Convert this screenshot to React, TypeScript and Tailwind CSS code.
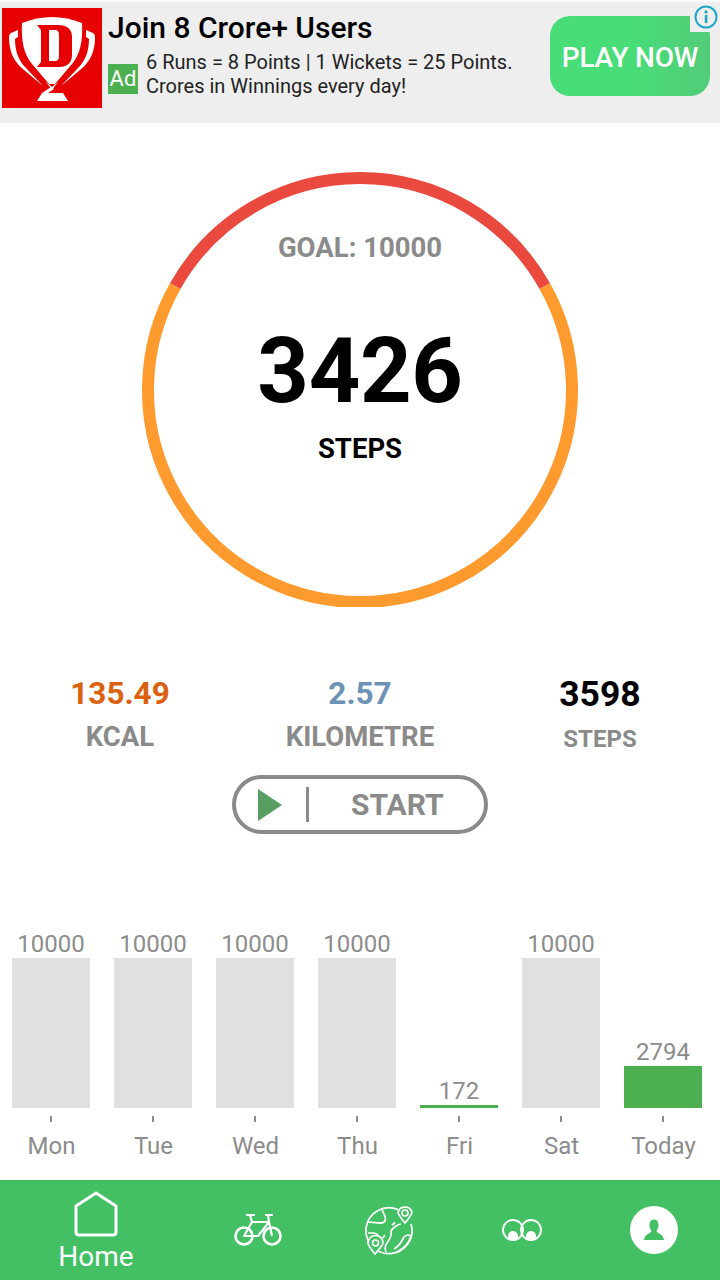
import React from "react";

const days = [
  { label: "Mon", value: "10000", height: 150, done: false },
  { label: "Tue", value: "10000", height: 150, done: false },
  { label: "Wed", value: "10000", height: 150, done: false },
  { label: "Thu", value: "10000", height: 150, done: false },
  { label: "Fri", value: "172", height: 3, done: true },
  { label: "Sat", value: "10000", height: 150, done: false },
  { label: "Today", value: "2794", height: 42, done: true },
];

function DreamLogo() {
  return (
    <svg viewBox="0 0 100 100" className="w-[100px] h-[100px] shrink-0">
      <rect width="100" height="100" fill="#e60000" />
      {/* handles */}
      <path d="M16 22 L9 25 Q7 26 7 29 C7 44 12 54 22 62 L41 78 L24 60 C16 52 13 42 13 31 L16 29 Z" fill="#fff" />
      <path d="M84 22 L91 25 Q93 26 93 29 C93 44 88 54 78 62 L59 78 L76 60 C84 52 87 42 87 31 L84 29 Z" fill="#fff" />
      {/* cup */}
      <path d="M20 15 C30 11 40 9 50 9 C60 9 70 11 80 15 C81 34 78 46 70 56 L53 76 L47 76 L30 56 C22 46 19 34 20 15 Z" fill="#fff" />
      {/* stem and base */}
      <path d="M44 74 L50 79 L56 74 L50 82 Z" fill="#fff" />
      <path d="M35 93 L40 85 L49 79 L52 81 L46 85 H61 L66 93 Z" fill="#fff" />
      {/* D */}
      <path
        fillRule="evenodd"
        d="M35 17 H56 C65 17 70 21 70 29 V47 C70 55 65 59 57 59 H35 L39 54 V22 Z M47 22 V53 H53 C56 53 57 51 57 48 V27 C57 24 56 22 53 22 Z"
        fill="#e60000"
      />
    </svg>
  );
}

function AdBanner() {
  return (
    <div className="h-[123px] shrink-0 border-t-2 border-[#fafafa] bg-[#eeeeee] relative flex pl-[2px] pt-[6px] font-['Roboto',sans-serif]">
      <DreamLogo />
      <div className="ml-[6px] w-[420px]">
        <div className="text-[30px] leading-[30px] font-medium text-black mt-[5px]">Join 8 Crore+ Users</div>
        <div className="flex mt-[7px]">
          <div className="w-[30px] h-[30px] mt-[14px] bg-[#4caf50] text-white text-[22px] leading-[30px] text-center shrink-0">Ad</div>
          <div className="ml-[8px] text-[20px] leading-[24px] text-[#222222] whitespace-nowrap">
            <div>6 Runs = 8 Points | 1 Wickets = 25 Points.</div>
            <div>Crores in Winnings every day!</div>
          </div>
        </div>
      </div>
      <div className="absolute left-[550px] top-[14px] w-[160px] h-[80px] rounded-[20px] bg-gradient-to-r from-[#48dd78] via-[#48dd78] to-[#52cc78] flex items-center justify-center pt-[3px] text-white text-[28px] font-medium tracking-[-0.2px]">
        PLAY NOW
      </div>
      <div className="absolute right-0 top-0 w-[30px] h-[30px] bg-[#eeeeee] flex items-center justify-center pl-[1px]">
        <svg viewBox="0 0 24 24" className="w-[24px] h-[24px]" fill="none">
          <circle cx="12" cy="12" r="10.5" stroke="#1da6c8" strokeWidth="2" />
          <rect x="10.8" y="10" width="2.6" height="8" fill="#1da6c8" />
          <circle cx="12" cy="6.9" r="1.6" fill="#1da6c8" />
        </svg>
      </div>
    </div>
  );
}

function Ring() {
  return (
    <div className="relative h-[484px] shrink-0 w-full font-['Roboto',sans-serif]">
      <svg viewBox="0 0 720 484" className="w-[720px] h-[484px] block">
        <path d="M175.3 163 A212 212 0 1 0 544.7 163" fill="none" stroke="#ff9a2e" strokeWidth="12" />
        <path d="M175.3 163 A212 212 0 0 1 544.7 163" fill="none" stroke="#ea4a3e" strokeWidth="12" />
      </svg>
      <div className="absolute inset-x-0 top-[107px] text-center text-[27.5px] leading-[36px] font-bold text-[#8a8a8a]">GOAL: 10000</div>
      <div className="absolute inset-x-0 top-[194px] text-center text-[90px] leading-[110px] font-bold text-black tracking-[-0.3px]">3426</div>
      <div className="absolute inset-x-0 top-[309px] text-center text-[27.5px] leading-[34px] font-bold text-black">STEPS</div>
    </div>
  );
}

function Stats() {
  return (
    <div className="grid grid-cols-3 text-center font-['Roboto',sans-serif] font-bold">
      <div>
        <div className="text-[31.5px] leading-[40px] text-[#d9610f]">135.49</div>
        <div className="text-[27.5px] leading-[46px] text-[#8a8a8a]">KCAL</div>
      </div>
      <div>
        <div className="text-[31.5px] leading-[40px] text-[#6c93b5]">2.57</div>
        <div className="text-[27.5px] leading-[46px] text-[#8a8a8a]">KILOMETRE</div>
      </div>
      <div>
        <div className="text-[35.5px] leading-[40px] text-black">3598</div>
        <div className="text-[24px] leading-[50px] text-[#8a8a8a]">STEPS</div>
      </div>
    </div>
  );
}

function StartButton() {
  return (
    <div className="flex justify-center mt-[11px] font-['Roboto',sans-serif]">
      <div className="w-[256px] h-[59px] rounded-full border-[4px] border-[#8a8a8a] flex items-center bg-white">
        <svg viewBox="0 0 24 32" className="w-[24px] h-[32px] ml-[22px]">
          <path d="M0 0 L24 16 L0 32 Z" fill="#569f60" />
        </svg>
        <div className="w-[3px] h-[35px] bg-[#8a8a8a] ml-[24px]" />
        <div className="ml-[42px] text-[30px] font-bold text-[#8a8a8a] leading-none">START</div>
      </div>
    </div>
  );
}

function WeekChart() {
  return (
    <div className="grid grid-cols-[repeat(7,102px)] items-end font-['Roboto',sans-serif]">
      {days.map((day) => (
        <div key={day.label} className="flex flex-col items-center">
          <div className="text-[24px] leading-[28px] text-[#8c8c8c]">{day.value}</div>
          <div
            className={`w-[78px] ${day.done ? "bg-[#4caf50]" : "bg-[#e0e0e0]"}`}
            style={{ height: day.height }}
          />
          <div className="w-[2px] h-[6px] bg-[#8a8a8a] mt-[8px]" />
          <div className="text-[24px] leading-[28px] text-[#8c8c8c] mt-[10px] mb-[20px] pl-[1px]">{day.label}</div>
        </div>
      ))}
    </div>
  );
}

function BottomNav() {
  return (
    <div className="h-[100px] shrink-0 bg-[#42c063] grid grid-cols-[192px_132px_132px_132px_132px] font-['Roboto',sans-serif]">
      <div className="flex flex-col items-center pt-[11px]">
        <svg viewBox="0 0 44 46" className="w-[44px] h-[46px]" fill="none">
          <path d="M22 2 L42 15 V41 Q42 44 39 44 H5 Q2 44 2 41 V15 Z" stroke="#fff" strokeWidth="3" strokeLinejoin="round" />
        </svg>
        <div className="text-[28px] leading-[30px] text-white mt-[5px]">Home</div>
      </div>
      <div className="flex justify-center pt-[33px]">
        <svg viewBox="0 0 48 34" className="w-[48px] h-[34px]" fill="none" stroke="#fff">
          <circle cx="10" cy="23" r="8.5" strokeWidth="2.6" />
          <circle cx="38" cy="23" r="8.5" strokeWidth="2.6" />
          <path d="M10 23 L18 9 H35 L24 23 Z M35 9 L38 23 M18 9 L16 2 M12 2 H21 M31 2 H39 M34 2 L35 9" strokeWidth="2.2" strokeLinejoin="round" />
        </svg>
      </div>
      <div className="flex justify-center pt-[25px]">
        <svg viewBox="0 0 50 50" className="w-[50px] h-[50px]" fill="none" stroke="#fff" strokeWidth="1.7">
          <path d="M33 4.5 A23 23 0 1 0 46 19" />
          <path d="M17 3 C17 9 22 10 20 16 C18 20 10 17 3 17" />
          <path d="M21 47 C17 38 28 36 26 26 C28 22 34 19 36 19" />
          <path d="M3 28 H9 C13 28 14 32 13 34" />
          <path d="M29 44 C33 42 36 38 39 32 C42 29 46 30 46 31 C44 38 38 44 32 47" />
          <path d="M27 20 L32 16 M20 30 L17 34" strokeDasharray="4 3" />
          <path d="M40 16 C35 10 33 7 33 5 A7.500 7.500 0 0 1 47 5 C47 7 45 10 40 16 Z" transform="translate(0 2)" fill="#42c063" />
          <circle cx="40" cy="8" r="3" />
          <path d="M10 47 C5 41 3 38 3 36 A7.500 7.500 0 0 1 18 36 C18 38 15 41 10 47 Z" transform="translate(0 2)" fill="#42c063" />
          <circle cx="10.5" cy="38" r="3" />
        </svg>
      </div>
      <div className="flex justify-center pt-[38px]">
        <svg viewBox="0 0 40 24" className="w-[40px] h-[24px]" fill="none" stroke="#fff" strokeWidth="1.8">
          <circle cx="11" cy="12" r="10" />
          <circle cx="29" cy="12" r="10" />
          <circle cx="11" cy="18" r="5" fill="#fff" stroke="none" />
          <circle cx="29" cy="18" r="5" fill="#fff" stroke="none" />
        </svg>
      </div>
      <div className="flex justify-center pt-[26px]">
        <div className="w-[48px] h-[48px] rounded-full bg-white flex items-center justify-center">
          <svg viewBox="0 0 24 24" className="w-[24px] h-[24px]" fill="#42c063">
            <path d="M12 1.500 C15.500 1.500 16.500 4.500 16.500 7.500 C16.500 10 15 12 14.500 13 C14.500 15 21.500 16 22 22 H2 C2.500 16 9.500 15 9.500 13 C9 12 7.500 10 7.500 7.500 C7.500 4.500 8.500 1.500 12 1.500 Z" />
          </svg>
        </div>
      </div>
    </div>
  );
}

export default function App() {
  return (
    <div className="w-[720px] h-[1280px] bg-white overflow-hidden flex flex-col">
      <AdBanner />
      <Ring />
      <div className="mt-[67px]">
        <Stats />
      </div>
      <StartButton />
      <div className="flex-1 flex flex-col justify-end">
        <WeekChart />
      </div>
      <BottomNav />
    </div>
  );
}
